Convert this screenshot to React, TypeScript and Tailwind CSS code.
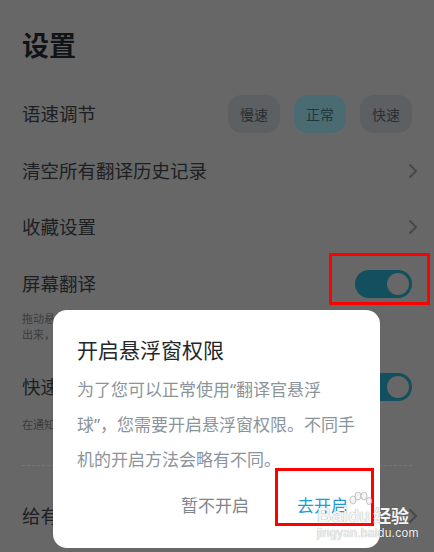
import { useState } from 'react';

const speeds = ['慢速', '正常', '快速'];

const Chevron = () => (
  <svg width="8" height="14" viewBox="0 0 8 14" className="-mr-[5px] shrink-0">
    <path d="M1 1l6 6-6 6" fill="none" stroke="#45484d" strokeWidth="2" strokeLinecap="round" strokeLinejoin="round" />
  </svg>
);

const Toggle = () => (
  <div className="w-[57px] h-[28px] rounded-full bg-[#13505f] flex items-center justify-end pr-[3px]">
    <div className="w-[22px] h-[22px] rounded-full bg-[#676767]" />
  </div>
);

const App = () => {
  const [speed, setSpeed] = useState('正常');

  return (
    <div className="relative w-[434px] h-[552px] overflow-hidden bg-[#676767] font-['Noto_Sans_CJK_SC',sans-serif]">
      {/* settings page (dimmed) */}
      <div className="px-[22px] pt-[27px]">
        <h1 className="text-[27px] leading-[36px] font-bold text-[#101417]">设置</h1>

        <div className="mt-[23px] h-[56.5px] flex items-center text-[18.5px] text-[#1d2023]">
          <span>语速调节</span>
          <div className="ml-auto flex gap-[14px]">
            {speeds.map((s) => (
              <button
                key={s}
                onClick={() => setSpeed(s)}
                className={`w-[52px] h-[38px] rounded-[14px] text-[14px] ${
                  s === speed ? 'bg-[#4a6b71] text-[#22373b]' : 'bg-[#5d6063] text-[#2a2d30]'
                }`}
              >
                {s}
              </button>
            ))}
          </div>
        </div>

        <div className="h-[56.5px] flex items-center text-[18.5px] text-[#1d2023]">
          <span>清空所有翻译历史记录</span>
          <div className="ml-auto"><Chevron /></div>
        </div>

        <div className="h-[56.5px] flex items-center text-[18.5px] text-[#1d2023]">
          <span>收藏设置</span>
          <div className="ml-auto"><Chevron /></div>
        </div>

        <div className="mt-[8px] h-[40px] flex items-center text-[18.5px] text-[#1d2023]">
          <span>屏幕翻译</span>
          <div className="ml-auto"><Toggle /></div>
        </div>
        <p className="mt-[6px] text-[11px] leading-[16px] text-[#3a3d40]">
          拖动悬浮球到需要翻译的文字上，松手后翻译结果就会显示
          <br />
          出来，无需切换应用
        </p>

        <div className="mt-[25px] h-[40px] flex items-center text-[18.5px] text-[#1d2023]">
          <span>快速翻译</span>
          <div className="ml-auto"><Toggle /></div>
        </div>
        <p className="mt-[9px] text-[11px] leading-[16px] text-[#3a3d40]">在通知栏快速打开翻译</p>

        <div className="mt-[33px] border-t border-dashed border-[#767676]" />

        <div className="mt-[22px] h-[56px] flex items-center text-[18.5px] text-[#1d2023]">
          <span>给有道翻译官评个分</span>
          <div className="ml-auto"><Chevron /></div>
        </div>
      </div>

      {/* annotation on the screen translation switch */}
      <div className="absolute left-[329px] top-[253px] w-[101px] h-[52px] border-[3px] border-[#ff0000]" />

      {/* permission dialog */}
      <div className="absolute left-[53px] top-[310px] w-[327px] rounded-[14px] bg-white pt-[25px] pb-[14px]">
        <h2 className="px-[24px] text-[21px] leading-[28px] text-[#24282b]">开启悬浮窗权限</h2>
        <p className="mt-[9px] px-[24px] whitespace-nowrap text-[17px] leading-[34px] text-[#8b949b]">
          为了您可以正常使用<span className="font-['Noto_Sans',sans-serif]">“</span>翻译官悬浮
          <br />
          球<span className="font-['Noto_Sans',sans-serif]">”</span>，您需要开启悬浮窗权限。不同手
          <br />
          机的开启方法会略有不同。
        </p>
        <div className="flex justify-end pr-[8px]">
          <button className="h-[58px] px-[24px] text-[17px] text-[#7e868d]">暂不开启</button>
          <button className="h-[58px] px-[24px] text-[17px] text-[#1e9bd6]">去开启</button>
        </div>
      </div>

      {/* annotation on the confirm button */}
      <div className="absolute left-[275px] top-[468px] w-[99px] h-[58px] border-[3px] border-[#ff0000]" />

      {/* watermark */}
      <div className="absolute left-[317px] top-[488px] text-[#f4f4f4] [text-shadow:0_0_1px_rgba(0,0,0,0.45)] font-['Liberation_Sans','Noto_Sans_CJK_SC',sans-serif]">
        <div className="flex items-end h-[38px]">
          <span className="text-[20px] leading-[22px] font-bold">Bai</span>
          <div className="relative w-[24px] h-[34px]">
            <svg width="24" height="22" viewBox="0 0 24 22" className="absolute left-0 top-0">
              <g fill="#f4f4f4" stroke="#b5b5b5" strokeWidth="0.8">
                <ellipse cx="5" cy="8" rx="3" ry="4" />
                <ellipse cx="10" cy="4" rx="3" ry="4" />
                <ellipse cx="16" cy="4" rx="3" ry="4" />
                <ellipse cx="21" cy="9" rx="2.6" ry="3.6" />
              </g>
            </svg>
            <span className="absolute left-0 bottom-0 text-[18px] leading-[20px] font-bold">du</span>
          </div>
          <span className="ml-[1px] text-[18px] leading-[22px] font-bold font-['Noto_Sans_CJK_SC',sans-serif]">经验</span>
        </div>
        <div className="text-[12px] leading-[14px] tracking-[0.3px]">jingyan.baidu.com</div>
      </div>
    </div>
  );
};

export default App;
